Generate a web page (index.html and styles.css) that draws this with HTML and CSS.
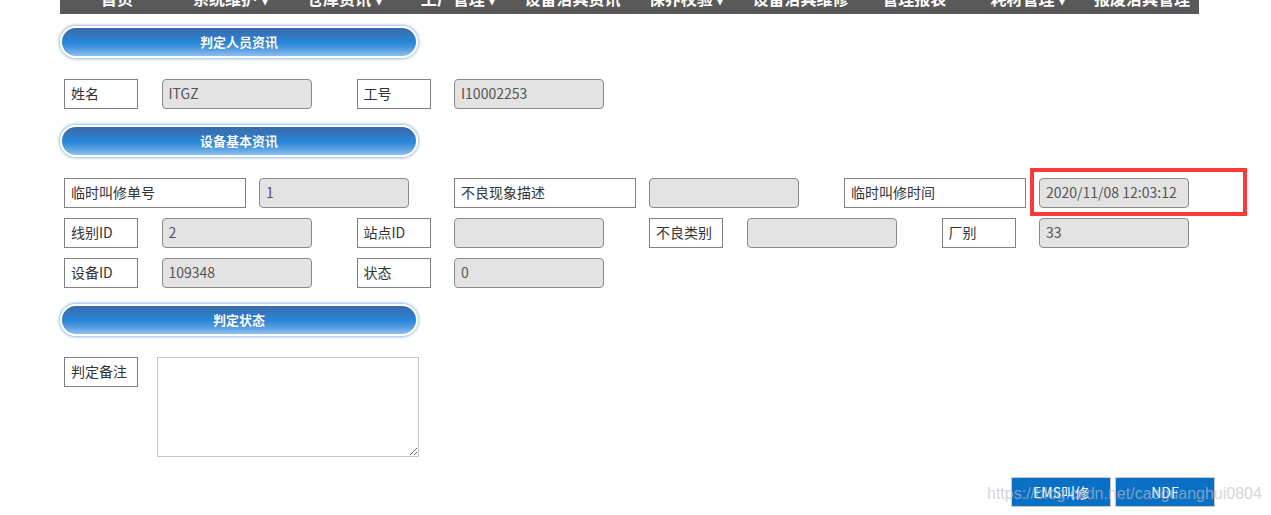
FILE: index.html
```html
<!DOCTYPE html>
<html lang="zh-CN">
<head>
<meta charset="utf-8">
<title>判定</title>
<link rel="stylesheet" href="styles.css">
</head>
<body>
<nav class="nav">
  <div class="nav-inner">
    <span class="nav-item">首页</span>
    <span class="nav-item">系统维护 ▾</span>
    <span class="nav-item">仓库资讯 ▾</span>
    <span class="nav-item">工厂管理 ▾</span>
    <span class="nav-item">设备治具资讯</span>
    <span class="nav-item">保养校验 ▾</span>
    <span class="nav-item">设备治具维修</span>
    <span class="nav-item">管理报表</span>
    <span class="nav-item">耗材管理 ▾</span>
    <span class="nav-item">报废治具管理</span>
  </div>
</nav>
<main class="content">
  <div class="sec-head">判定人员资讯</div>
  <div class="grid grid-first">
    <div class="lbl c1">姓名</div>
    <div class="inp c2">ITGZ</div>
    <div class="lbl c4">工号</div>
    <div class="inp c5">I10002253</div>
  </div>

  <div class="sec-head">设备基本资讯</div>
  <div class="grid">
    <div class="lbl wide c1">临时叫修单号</div>
    <div class="inp c3">1</div>
    <div class="lbl wide c5">不良现象描述</div>
    <div class="inp c7"></div>
    <div class="lbl wide c9">临时叫修时间</div>
    <div class="inp c11 marked">2020/11/08 12:03:12<span class="redbox"></span></div>

    <div class="lbl c1">线别ID</div>
    <div class="inp c2">2</div>
    <div class="lbl c4">站点ID</div>
    <div class="inp c5"></div>
    <div class="lbl c7">不良类别</div>
    <div class="inp c8"></div>
    <div class="lbl c10">厂别</div>
    <div class="inp c11">33</div>

    <div class="lbl c1">设备ID</div>
    <div class="inp c2">109348</div>
    <div class="lbl c4">状态</div>
    <div class="inp c5">0</div>
  </div>

  <div class="sec-head">判定状态</div>
  <div class="remark-row">
    <div class="lbl">判定备注</div>
    <textarea class="remark"></textarea>
  </div>

  <div class="btn-row">
    <button class="btn">EMS叫修</button>
    <button class="btn">NDF</button>
    <span class="watermark">https://blog.csdn.net/caoguanghui0804</span>
  </div>
</main>
</body>
</html>
```
FILE: styles.css
```css
html, body {
  margin: 0;
  padding: 0;
  background: #fff;
  font-family: "Noto Sans CJK SC", "Microsoft YaHei", sans-serif;
  overflow: hidden;
}

.nav {
  margin-left: 60px;
  width: 1139px;
  height: 14px;
  background: #595959;
  overflow: hidden;
}
.nav-inner {
  display: flex;
  margin-top: -13px;
}
.nav-item {
  flex: 1 1 0;
  text-align: center;
  color: #fff;
  font-weight: bold;
  font-size: 16px;
  line-height: 22px;
  white-space: nowrap;
}

.content {
  padding-left: 60px;
  display: flex;
  flex-direction: column;
}

.sec-head {
  box-sizing: border-box;
  width: 358px;
  height: 32px;
  margin-top: 12px;
  border: 2px solid #fff;
  border-radius: 16px;
  box-shadow: 0 0 3px 1px rgba(110, 160, 215, 0.75);
  background: linear-gradient(#3a6aa8 0%, #2f7cc8 35%, #2486d8 50%, #4d98de 72%, #8cc0ef 100%);
  color: #fff;
  font-weight: bold;
  font-size: 13px;
  line-height: 28px;
  text-align: center;
  text-shadow: 0 0 1px rgba(0, 40, 90, 0.4);
}
.sec-head + .grid,
.sec-head + .remark-row {
  margin-top: 21px;
}
.grid + .sec-head {
  margin-top: 16px;
}

.grid {
  display: grid;
  grid-template-columns: repeat(12, 97.5px);
  grid-auto-rows: 30px;
  row-gap: 10px;
  padding-left: 4px;
}

.lbl {
  box-sizing: border-box;
  width: 74px;
  height: 30px;
  border: 1px solid #808080;
  background: #fff;
  color: #333;
  font-size: 14px;
  line-height: 27px;
  padding-left: 6px;
  white-space: nowrap;
}
.lbl.wide {
  width: 182px;
  grid-column-end: span 2;
}

.inp {
  box-sizing: border-box;
  width: 150px;
  height: 30px;
  border: 1px solid #8a8a8a;
  border-radius: 4px;
  background: #e3e3e3;
  color: #555;
  font-size: 14px;
  line-height: 27px;
  padding-left: 6px;
  white-space: nowrap;
  position: relative;
}

.c1 { grid-column-start: 1; }
.c2 { grid-column-start: 2; }
.c3 { grid-column-start: 3; }
.c4 { grid-column-start: 4; }
.c5 { grid-column-start: 5; }
.c7 { grid-column-start: 7; }
.c8 { grid-column-start: 8; }
.c9 { grid-column-start: 9; }
.c10 { grid-column-start: 10; }
.c11 { grid-column-start: 11; }

.redbox {
  position: absolute;
  left: -10px;
  top: -11px;
  width: 217px;
  height: 48px;
  box-sizing: border-box;
  border: 4px solid #fc3a3a;
}

.remark-row {
  display: flex;
  align-items: flex-start;
  padding-left: 4px;
}
.remark {
  box-sizing: border-box;
  width: 262px;
  height: 100px;
  margin: 0 0 0 19px;
  border: 1px solid #c6c6c6;
  background: #fff;
  padding: 2px;
  font-family: inherit;
}

.btn-row {
  position: relative;
  display: flex;
  gap: 4px;
  margin-top: 20px;
  margin-left: 951px;
}
.btn {
  box-sizing: border-box;
  width: 100px;
  height: 30px;
  border: 1px solid #c9c9c9;
  background: #0a70c6;
  color: #fff;
  font-family: "Noto Sans CJK SC", sans-serif;
  font-size: 14px;
  padding: 0;
}
.watermark {
  position: absolute;
  left: -24px;
  top: 8px;
  font-family: "Liberation Sans", Arial, sans-serif;
  font-size: 16px;
  color: rgba(190, 190, 190, 0.65);
  white-space: nowrap;
  pointer-events: none;
}
```
